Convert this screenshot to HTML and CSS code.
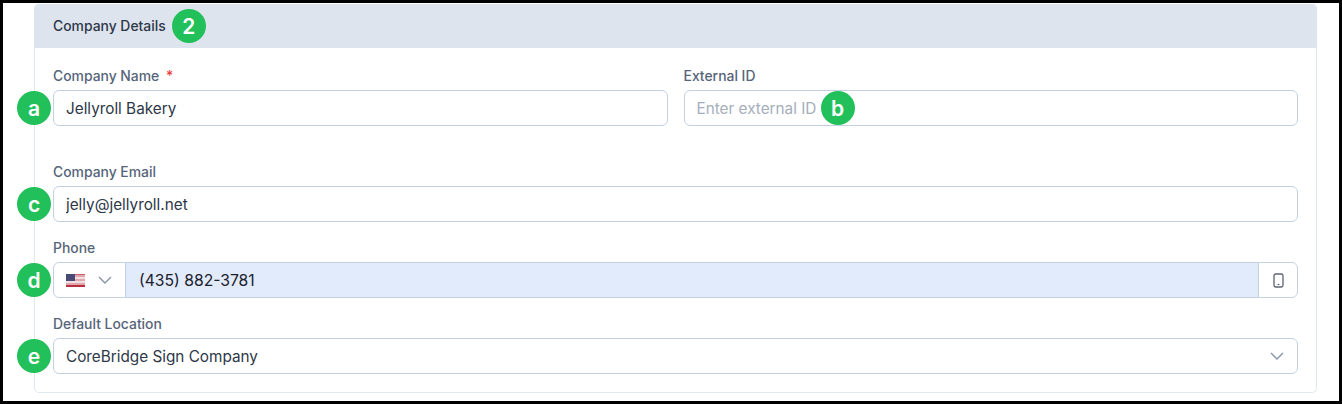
FILE: index.html
```html
<!DOCTYPE html>
<html lang="en">
<head>
    <meta charset="UTF-8">
    <title>Company Details</title>
    <link rel="stylesheet" href="styles.css">
</head>
<body>
    <div class="card">
        <div class="card-header">
            <span>Company Details</span>
            <span class="badge badge-title">2</span>
        </div>
        <div class="card-body">
            <div class="row">
                <div class="field">
                    <label>Company Name <span class="req">*</span></label>
                    <div class="control">
                        <span class="badge badge-side">a</span>
                        <input class="input" type="text" value="Jellyroll Bakery">
                    </div>
                </div>
                <div class="field">
                    <label>External ID</label>
                    <div class="control">
                        <input class="input" type="text" placeholder="Enter external ID">
                        <span class="badge badge-inline">b</span>
                    </div>
                </div>
            </div>
            <div class="field field-email">
                <label>Company Email</label>
                <div class="control">
                    <span class="badge badge-side">c</span>
                    <input class="input" type="text" value="jelly@jellyroll.net">
                </div>
            </div>
            <div class="field">
                <label>Phone</label>
                <div class="control phone">
                    <span class="badge badge-side">d</span>
                    <div class="country">
                        <svg class="flag" width="19" height="13" viewBox="0 0 19 13">
                            <rect width="19" height="13" fill="#e3a6ac"/>
                            <rect y="0" width="19" height="1" fill="#c9606b"/>
                            <rect y="3" width="19" height="2" fill="#f0dfe0"/>
                            <rect y="7" width="19" height="2" fill="#f0dfe0"/>
                            <rect y="11" width="19" height="2" fill="#b8303e"/>
                            <rect width="9" height="7" fill="#4a4a78"/>
                        </svg>
                        <svg class="chevron" width="14" height="8" viewBox="0 0 14 8">
                            <path d="M1 1l6 6 6-6" fill="none" stroke="#8494ab" stroke-width="1.4"/>
                        </svg>
                    </div>
                    <div class="phone-number">(435) 882-3781</div>
                    <div class="phone-type">
                        <svg width="11" height="15" viewBox="0 0 11 15">
                            <rect x="1" y="1" width="9" height="13" rx="1.8" fill="none" stroke="#5b6472" stroke-width="1.3"/>
                            <path d="M4.5 11.5h2" stroke="#5b6472" stroke-width="1.1"/>
                        </svg>
                    </div>
                </div>
            </div>
            <div class="field">
                <label>Default Location</label>
                <div class="control">
                    <span class="badge badge-side">e</span>
                    <div class="select">
                        <span>CoreBridge Sign Company</span>
                        <svg class="chevron" width="14" height="8" viewBox="0 0 14 8">
                            <path d="M1 1l6 6 6-6" fill="none" stroke="#8494ab" stroke-width="1.4"/>
                        </svg>
                    </div>
                </div>
            </div>
        </div>
    </div>
</body>
</html>
```

FILE: styles.css
```css
html, body {
    height: 100%;
}
body {
    font-family: Inter, "Liberation Sans", sans-serif;
    margin: 0;
    background-color: #fff;
    color: #2d3748;
    box-sizing: border-box;
    height: 404px;
    overflow: hidden;
    border: 3px solid #000;
    padding: 1px 22px 0 31px;
}
.card {
    border: 1px solid #e2e8f0;
    border-top: none;
    border-radius: 5px;
    height: 389px;
    box-sizing: border-box;
}
.card-header {
    height: 44px;
    background-color: #dee4ee;
    border-radius: 5px 5px 0 0;
    display: flex;
    align-items: center;
    gap: 6px;
    padding-left: 19px;
    font-size: 13.9px;
    font-weight: 500;
    position: relative;
    margin: 0 -1px;
}
.card-body {
    padding: 18px 18px 0;
}
.row {
    display: grid;
    grid-template-columns: 1fr 1fr;
    gap: 16px;
}
.field {
    margin-bottom: 16px;
}
.field-email {
    margin-top: 20px;
}
label {
    display: block;
    font-size: 13.9px;
    font-weight: 500;
    line-height: 20px;
    margin-bottom: 4px;
    color: #566479;
}
.req {
    color: #ef3b3b;
    margin-left: 3px;
}
.control {
    position: relative;
    height: 36px;
}
.input, .select {
    width: 100%;
    height: 36px;
    box-sizing: border-box;
    border: 1px solid #c5d0de;
    border-radius: 6px;
    padding: 0 12px;
    font-family: inherit;
    font-size: 15.3px;
    color: #2d3748;
    background: #fff;
    outline: none;
}
.input::placeholder {
    color: #a5aebb;
}
.select {
    display: flex;
    align-items: center;
    justify-content: space-between;
    padding-right: 13px;
}
.phone {
    display: flex;
}
.country {
    width: 73px;
    box-sizing: border-box;
    border: 1px solid #c5d0de;
    border-radius: 6px 0 0 6px;
    display: flex;
    align-items: center;
    gap: 13px;
    padding-left: 12px;
}
.phone-number {
    flex: 1;
    background-color: #e2ebfc;
    border-top: 1px solid #c5d0de;
    border-bottom: 1px solid #c5d0de;
    display: flex;
    align-items: center;
    padding-left: 13px;
    font-size: 15.7px;
    color: #1a202c;
}
.phone-type {
    width: 40px;
    box-sizing: border-box;
    border: 1px solid #c5d0de;
    border-radius: 0 6px 6px 0;
    display: flex;
    align-items: center;
    justify-content: center;
}
.badge {
    width: 34px;
    height: 34px;
    border-radius: 50%;
    background-color: #22c05a;
    color: #fff;
    font-size: 21px;
    font-weight: 600;
    display: flex;
    align-items: center;
    justify-content: center;
}
.badge-side {
    position: absolute;
    left: -36px;
    top: 1px;
}
.badge-inline {
    position: absolute;
    left: 137px;
    top: 1px;
}
```
